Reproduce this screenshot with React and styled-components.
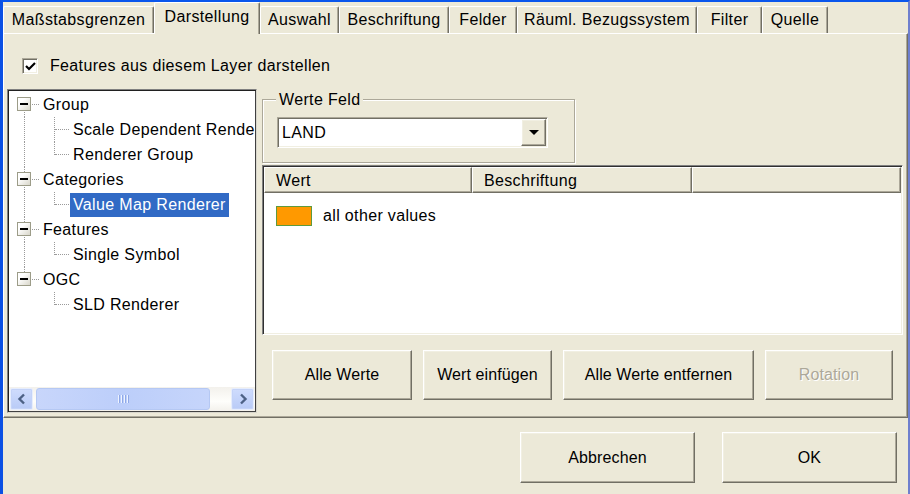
import React from 'react';
import styled, { createGlobalStyle, css } from 'styled-components';

const C = {
  face: '#ECE9D8',
  light: '#F1EFE2',
  shadow: '#ACA899',
  dark: '#716F64',
  hi: '#FFFFFF',
  sel: '#316AC5',
};

const Global = createGlobalStyle`
  html, body { margin: 0; padding: 0; background: ${C.face}; overflow: hidden; }
  body { font-family: "Liberation Sans", Arial, sans-serif; font-size: 16px; letter-spacing: 0.35px; color: #000; }
  * { box-sizing: border-box; }
`;

const Window = styled.div`
  width: 910px;
  height: 494px;
  background: ${C.face};
  border-left: 3px solid #0B50E4;
  border-top: 2px solid #0A56EC;
  border-right: 2px solid #6E7FCE;
  display: flex;
  flex-direction: column;
`;

const TabStrip = styled.div`
  height: 31px;
  display: flex;
  align-items: flex-end;
  position: relative;
  z-index: 2;
`;

const Tab = styled.div`
  width: ${(p) => p.$w}px;
  height: ${(p) => (p.$active ? 32 : 27)}px;
  margin-bottom: ${(p) => (p.$active ? -1 : 0)}px;
  display: flex;
  align-items: center;
  justify-content: center;
  padding-bottom: ${(p) => (p.$active ? 3 : 0)}px;
  background: ${C.face};
  border-left: 1px solid ${C.hi};
  border-top: 1px solid ${C.hi};
  border-right: 1px solid ${C.dark};
  border-top-left-radius: 2px;
  border-top-right-radius: 2px;
  box-shadow: inset -1px 0 ${C.shadow};
  white-space: nowrap;
`;

const Panel = styled.div`
  height: 385px;
  border-top: 1px solid ${C.hi};
  border-left: 1px solid ${C.hi};
  border-right: 1px solid ${C.dark};
  border-bottom: 1px solid ${C.dark};
  box-shadow: inset -1px -1px ${C.shadow};
  padding: 0 0 0 3px;
  display: flex;
  flex-direction: column;
`;

const CheckRow = styled.label`
  margin: 22px 0 0 15px;
  height: 20px;
  display: flex;
  align-items: center;
  gap: 12px;
`;

const sunken = css`
  border: 1px solid;
  border-color: ${C.shadow} ${C.hi} ${C.hi} ${C.shadow};
  box-shadow: inset 1px 1px ${C.dark}, inset -1px -1px ${C.light};
`;

const raised = css`
  border: 1px solid;
  border-color: ${C.hi} ${C.dark} ${C.dark} ${C.hi};
  box-shadow: inset -1px -1px ${C.shadow}, inset 1px 1px ${C.light};
`;

const CheckBox = styled.span`
  width: 16px;
  height: 16px;
  background: #fff;
  ${sunken};
  display: flex;
  align-items: center;
  justify-content: center;
`;

const Body = styled.div`
  margin-top: 13px;
  height: 324px;
  display: flex;
  gap: 5px;
`;

const Tree = styled.div`
  width: 250px;
  height: 324px;
  background: #fff;
  border: 1px solid;
  border-color: #808080 #d8d6cc #d8d6cc #808080;
  box-shadow: inset 1px 1px #202020, inset -1px -1px #404040;
  padding: 1px;
  display: flex;
  flex-direction: column;
`;

const TreeRows = styled.div`
  flex: 1;
  padding-top: 1px;
  overflow: hidden;
`;

const TreeRow = styled.div`
  height: 25px;
  display: flex;
  align-items: center;
  white-space: nowrap;
`;

const Cell = styled.span`
  position: relative;
  flex: none;
  width: 30px;
  height: 25px;
  &::before {
    content: '';
    display: ${(p) => (p.$v === 'none' ? 'none' : 'block')};
    position: absolute;
    left: 15px;
    top: ${(p) => (p.$v === 'bottom' ? '12px' : '0')};
    bottom: ${(p) => (p.$v === 'top' ? '12px' : '0')};
    border-left: 1px dotted #9a9a9a;
  }
  &::after {
    content: '';
    display: ${(p) => (p.$h ? 'block' : 'none')};
    position: absolute;
    left: 16px;
    width: 14px;
    top: 12px;
    border-top: 1px dotted #9a9a9a;
  }
`;

const Expander = styled.span`
  position: absolute;
  z-index: 1;
  left: 8px;
  top: 5px;
  width: 14px;
  height: 14px;
  border: 1px solid #9c9c88;
  background: linear-gradient(135deg, #ffffff 30%, #d9d7cb);
  &::after {
    content: '';
    position: absolute;
    left: 2px;
    right: 2px;
    top: 5px;
    height: 2px;
    background: #000;
  }
`;

const NodeLabel = styled.span`
  height: 24px;
  line-height: 24px;
  padding: 0 3px;
  margin-left: 1px;
  background: ${(p) => (p.$sel ? C.sel : 'transparent')};
  color: ${(p) => (p.$sel ? '#fff' : '#000')};
`;

const HScroll = styled.div`
  height: 24px;
  display: flex;
  align-items: center;
  padding: 0 1px;
  gap: 3px;
  background: linear-gradient(#f3f1ec, #fefefb 60%, #f3f1ec);
`;

const ScrollBtn = styled.span`
  width: 23px;
  height: 22px;
  flex: none;
  border-radius: 2px;
  border: 1px solid #e6edfd;
  background: linear-gradient(#cfdcfd, #b9cbf7);
  box-shadow: inset 0 0 0 1px #c4d3f8;
  display: flex;
  align-items: center;
  justify-content: center;
`;

const Thumb = styled.span`
  width: 174px;
  height: 22px;
  flex: none;
  margin-right: auto;
  border-radius: 3px;
  border: 1px solid #b5c8f3;
  background: linear-gradient(90deg, #c8d6fb, #bccefa 50%, #c6d5fb);
  display: flex;
  align-items: center;
  justify-content: center;
  gap: 1px;
`;

const Grip = styled.span`
  width: 2px;
  height: 8px;
  border-left: 1px solid #eef3fe;
  border-right: 1px solid #8fa9e8;
`;

const Right = styled.div`
  width: 641px;
  display: flex;
  flex-direction: column;
`;

const GroupBox = styled.div`
  position: relative;
  margin-top: 10px;
  width: 313px;
  height: 64px;
  border: 1px solid ${C.shadow};
  box-shadow: inset 1px 1px #fff, 1px 1px #fff;
  padding: 17px 0 0 14px;
`;

const Legend = styled.span`
  position: absolute;
  left: 13px;
  top: -9px;
  padding: 0 3px;
  background: ${C.face};
  line-height: 18px;
`;

const Combo = styled.div`
  width: 271px;
  height: 31px;
  background: #fff;
  ${sunken};
  display: flex;
  align-items: center;
  padding: 0 1px 0 4px;
`;

const ComboText = styled.span`
  flex: 1;
`;

const DropBtn = styled.span`
  width: 25px;
  height: 27px;
  background: ${C.face};
  ${raised};
  display: flex;
  align-items: center;
  justify-content: center;
  &::after {
    content: '';
    border-left: 5px solid transparent;
    border-right: 5px solid transparent;
    border-top: 5px solid #000;
  }
`;

const ListView = styled.div`
  margin-top: 2px;
  height: 170px;
  background: #fff;
  border: 1px solid;
  border-color: #808080 #fff #fff #808080;
  box-shadow: inset 1px 1px #303030, inset -1px -1px ${C.light};
  padding: 1px;
  display: flex;
  flex-direction: column;
`;

const Header = styled.div`
  height: 26px;
  display: flex;
`;

const HeadCell = styled.div`
  width: ${(p) => (p.$w ? `${p.$w}px` : 'auto')};
  flex: ${(p) => (p.$w ? 'none' : '1')};
  height: 26px;
  background: ${C.face};
  border-top: 1px solid #fff;
  border-left: 1px solid #fff;
  border-right: 1px solid ${C.dark};
  border-bottom: 1px solid ${C.dark};
  box-shadow: inset -1px -1px ${C.shadow};
  padding-left: 11px;
  line-height: 25px;
  white-space: nowrap;
`;

const ListRow = styled.div`
  margin-top: 13px;
  padding-left: 12px;
  display: flex;
  align-items: center;
  gap: 11px;
`;

const Swatch = styled.span`
  width: 36px;
  height: 20px;
  background: ${(p) => p.$c};
  border: 1px solid #5f9a3e;
`;

const ButtonRow = styled.div`
  margin-top: 15px;
  padding-left: 10px;
  display: flex;
  gap: 11px;
`;

const Button = styled.button`
  width: ${(p) => p.$w}px;
  height: ${(p) => p.$h || 50}px;
  flex: none;
  font: inherit;
  letter-spacing: 0.1px;
  background: ${C.face};
  ${raised};
  color: ${(p) => (p.disabled ? C.shadow : '#000')};
  text-shadow: ${(p) => (p.disabled ? '1px 1px #fff' : 'none')};
  padding: 0;
  margin: 0;
`;

const Footer = styled.div`
  flex: 1;
  display: flex;
  justify-content: flex-end;
  padding: 14px 11px 0 0;
  gap: 27px;
`;

const tabs = [
  ['Maßstabsgrenzen', 151],
  ['Darstellung', 106, true],
  ['Auswahl', 79],
  ['Beschriftung', 110],
  ['Felder', 68],
  ['Räuml. Bezugssystem', 180],
  ['Filter', 65],
  ['Quelle', 66],
];

const tree = [
  { label: 'Group', children: ['Scale Dependent Renderer', 'Renderer Group'] },
  { label: 'Categories', children: ['Value Map Renderer'] },
  { label: 'Features', children: ['Single Symbol'] },
  { label: 'OGC', children: ['SLD Renderer'] },
];

const selected = 'Value Map Renderer';

function TreeView() {
  const rows = [];
  tree.forEach((node, i) => {
    const first = i === 0;
    const last = i === tree.length - 1;
    const v = first ? 'bottom' : last ? 'top' : 'full';
    rows.push(
      <TreeRow key={node.label}>
        <Cell $v={v} $h>
          <Expander />
        </Cell>
        <NodeLabel>{node.label}</NodeLabel>
      </TreeRow>
    );
    node.children.forEach((c, j) => {
      const lastChild = j === node.children.length - 1;
      rows.push(
        <TreeRow key={c}>
          <Cell $v={last ? 'none' : 'full'} />
          <Cell $v={lastChild ? 'top' : 'full'} $h />
          <NodeLabel $sel={c === selected}>{c}</NodeLabel>
        </TreeRow>
      );
    });
  });
  return (
    <Tree>
      <TreeRows>{rows}</TreeRows>
      <HScroll>
        <ScrollBtn>
          <svg width="10" height="12" viewBox="0 0 10 12">
            <path d="M7 1.5 L2.5 6 L7 10.5" fill="none" stroke="#4D6185" strokeWidth="2.4" />
          </svg>
        </ScrollBtn>
        <Thumb>
          <Grip />
          <Grip />
          <Grip />
          <Grip />
        </Thumb>
        <ScrollBtn>
          <svg width="10" height="12" viewBox="0 0 10 12">
            <path d="M3 1.5 L7.5 6 L3 10.5" fill="none" stroke="#4D6185" strokeWidth="2.4" />
          </svg>
        </ScrollBtn>
      </HScroll>
    </Tree>
  );
}

export default function App() {
  return (
    <Window>
      <Global />
      <TabStrip>
        {tabs.map(([t, w, a]) => (
          <Tab key={t} $w={w} $active={a}>
            {t}
          </Tab>
        ))}
      </TabStrip>
      <Panel>
        <CheckRow>
          <CheckBox>
            <svg width="11" height="11" viewBox="0 0 11 11">
              <path d="M1 5 L4 8 L10 2" fill="none" stroke="#000" strokeWidth="2.2" />
            </svg>
          </CheckBox>
          Features aus diesem Layer darstellen
        </CheckRow>
        <Body>
          <TreeView />
          <Right>
            <GroupBox>
              <Legend>Werte Feld</Legend>
              <Combo>
                <ComboText>LAND</ComboText>
                <DropBtn />
              </Combo>
            </GroupBox>
            <ListView>
              <Header>
                <HeadCell $w={208}>Wert</HeadCell>
                <HeadCell $w={220}>Beschriftung</HeadCell>
                <HeadCell />
              </Header>
              <ListRow>
                <Swatch $c="#FF9900" />
                all other values
              </ListRow>
            </ListView>
            <ButtonRow>
              <Button $w={140}>Alle Werte</Button>
              <Button $w={129}>Wert einfügen</Button>
              <Button $w={191}>Alle Werte entfernen</Button>
              <Button $w={128} disabled>
                Rotation
              </Button>
            </ButtonRow>
          </Right>
        </Body>
      </Panel>
      <Footer>
        <Button $w={175} $h={51}>Abbrechen</Button>
        <Button $w={175} $h={51}>OK</Button>
      </Footer>
    </Window>
  );
}
